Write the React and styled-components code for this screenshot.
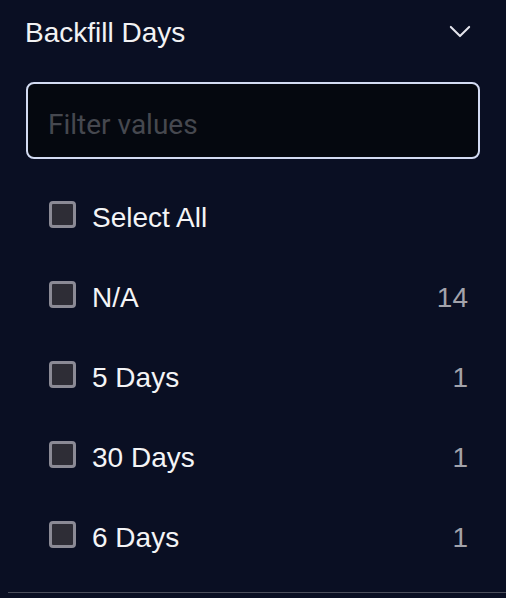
import React, { useState } from "react"
import styled, { createGlobalStyle } from "styled-components"

const GlobalStyle = createGlobalStyle`
  html, body {
    margin: 0;
    padding: 0;
    background: #0a0f23;
  }
  * { box-sizing: border-box; }
`

const options = [
  { label: "N/A", count: 14 },
  { label: "5 Days", count: 1 },
  { label: "30 Days", count: 1 },
  { label: "6 Days", count: 1 },
]

const Checkbox = () => <Box />

const App = () => {
  const [filter, setFilter] = useState("")

  return (
    <Panel>
      <GlobalStyle />
      <Header>
        <Title>Backfill Days</Title>
        <Chevron viewBox="0 0 24 14" aria-hidden>
          <path d="M2 2 L12 12 L22 2" fill="none" stroke="#e4e4ec" strokeWidth="2.2" strokeLinecap="round" strokeLinejoin="round" />
        </Chevron>
      </Header>
      <SearchWrap>
        <Search
          placeholder="Filter values"
          value={filter}
          onChange={(e) => setFilter(e.target.value)}
        />
      </SearchWrap>
      <List>
        <Row>
          <Checkbox />
          <Label>Select All</Label>
        </Row>
        {options.map((o, i) => (
          <Row key={i}>
            <Checkbox />
            <Label>{o.label}</Label>
            <Count>{o.count}</Count>
          </Row>
        ))}
      </List>
      <Divider />
    </Panel>
  )
}

export default App

const Panel = styled.div`
  width: 506px;
  height: 598px;
  background: #0a0f23;
  font-family: "Liberation Sans", Arial, sans-serif;
  overflow: hidden;
`

const Header = styled.div`
  display: flex;
  align-items: center;
  justify-content: space-between;
  padding: 17px 35px 0 25px;
  height: 49px;
`

const Title = styled.div`
  font-size: 28px;
  line-height: 32px;
  color: #f2f2f4;
`

const Chevron = styled.svg`
  width: 22px;
  height: 13px;
  margin-top: -3px;
`

const SearchWrap = styled.div`
  padding: 33px 26px 0 26px;
`

const Search = styled.input`
  display: block;
  width: 454px;
  height: 77px;
  border: 2px solid #d3dbf2;
  border-radius: 8px;
  background: #05080f;
  padding: 8px 20px 0;
  font-family: Roboto, "Liberation Sans", sans-serif;
  font-size: 28px;
  color: #f2f2f4;
  outline: none;
  &::placeholder {
    color: #46484f;
  }
`

const List = styled.div`
  display: flex;
  flex-direction: column;
  padding: 16px 38px 0 49px;
`

const Row = styled.div`
  display: flex;
  align-items: center;
  height: 80px;
`

const Box = styled.span`
  width: 27px;
  height: 27px;
  border: 3px solid #8b8a95;
  border-radius: 4px;
  background: #2e2d36;
  flex-shrink: 0;
  margin-top: -1px;
`

const Label = styled.span`
  margin: 6px 0 0 16px;
  font-size: 28px;
  line-height: 32px;
  color: #f4f4f6;
  flex: 1;
`

const Count = styled.span`
  margin-top: 6px;
  font-size: 28px;
  line-height: 32px;
  color: #a3a3ab;
`

const Divider = styled.div`
  margin: 17px 0 0 8px;
  height: 1px;
  background: #4c4f5c;
`
